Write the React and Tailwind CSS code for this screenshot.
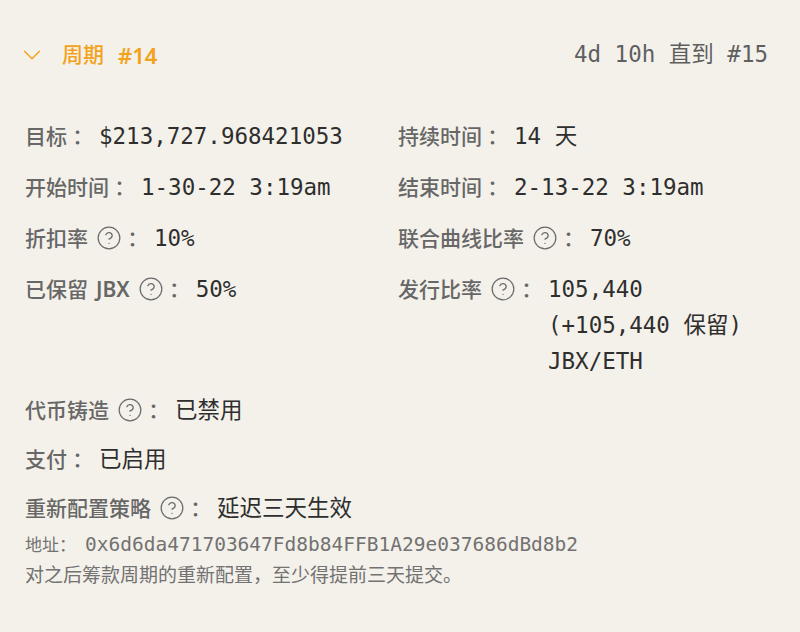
import { ChevronDown, CircleHelp } from 'lucide-react';

const SANS = 'font-["Noto_Sans","Noto_Sans_CJK_SC",sans-serif]';
const MONO = 'font-["DejaVu_Sans_Mono","Noto_Sans_CJK_SC",monospace]';
const COLON = 'font-["Noto_Sans_CJK_JP",sans-serif]';

function Help() {
  return (
    <span className="inline-flex items-center ml-[8px]">
      <CircleHelp size={26} strokeWidth={1.15} className="text-[#6b6b6b]" />
    </span>
  );
}

function Row({ label, help, children }) {
  return (
    <div className="flex items-start leading-[36px]">
      <span className={`${SANS} text-[21px] font-medium text-[#676767] whitespace-nowrap flex items-center`}>
        {label}
        {help && <Help />}
        <span className={COLON}>：</span>
      </span>
      <span className={`${MONO} text-[22.5px] text-[#2e2e2e] pl-[11px]`}>{children}</span>
    </div>
  );
}

export default function App() {
  return (
    <div className="min-h-screen bg-[#f4f1ea] px-[25px] pt-[34px]">
      {/* header */}
      <div className="flex items-center justify-between h-[42px]">
        <div className="flex items-center text-[#f3a21c]">
          <ChevronDown size={30} strokeWidth={1.2} className="-ml-[8px]" />
          <span className={`${SANS} text-[21px] font-medium ml-[15px]`}>周期</span>
          <span className={`${SANS} text-[22px] font-semibold ml-[14px]`}>#14</span>
        </div>
        <div className={`${MONO} text-[22.5px] text-[#5f5f5f] mr-[7px]`}>4d 10h 直到 #15</div>
      </div>

      {/* details */}
      <div className="grid grid-cols-[373px_1fr] gap-y-[15px] mt-[42px]">
        <Row label="目标">$213,727.968421053</Row>
        <Row label="持续时间">14 天</Row>
        <Row label="开始时间">1-30-22 3:19am</Row>
        <Row label="结束时间">2-13-22 3:19am</Row>
        <Row label="折扣率" help>10%</Row>
        <Row label="联合曲线比率" help>70%</Row>
        <Row label={<>已保留 <span className="font-semibold ml-[8px]">JBX</span></>} help>50%</Row>
        <Row label="发行比率" help>
          <span className="block">105,440</span>
          <span className="block">(+105,440 保留)</span>
          <span className="block">JBX/ETH</span>
        </Row>
      </div>

      <div className="flex flex-col gap-y-[13px] mt-[13px]">
        <Row label="代币铸造" help>已禁用</Row>
        <Row label="支付">已启用</Row>
        <Row label="重新配置策略" help>延迟三天生效</Row>
      </div>

      {/* footer */}
      <div className="mt-[3px] text-[#727272] leading-[31px]">
        <div className="flex">
          <span className={`${SANS} text-[17px]`}>地址：</span>
          <span className={`${MONO} text-[19.5px] ml-[9px]`}>0x6d6da471703647Fd8b84FFB1A29e037686dBd8b2</span>
        </div>
        <div className={`${SANS} text-[19px]`}>对之后筹款周期的重新配置，至少得提前三天提交。</div>
      </div>
    </div>
  );
}
